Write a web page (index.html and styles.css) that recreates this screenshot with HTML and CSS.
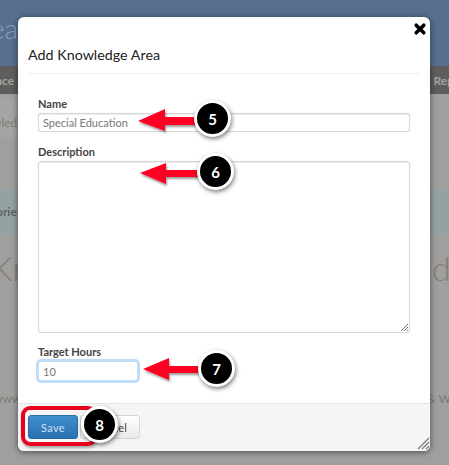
FILE: index.html
```html
<!DOCTYPE html>
<html lang="en">
<head>
    <meta charset="UTF-8">
    <meta name="viewport" content="width=device-width, initial-scale=1.0">
    <title>Add Knowledge Area</title>
    <link rel="stylesheet" href="styles.css">
</head>
<body>
<div class="page">
    <div class="page-banner"><span>ea</span></div>
    <div class="page-nav"><span>ace</span><span>Rep</span></div>
    <div class="page-crumbs"><span>wled</span></div>
    <div class="page-alert"><span>orie</span></div>
    <div class="page-heading"><span>Kn</span><span>dg</span></div>
    <div class="page-footer"><span>www</span><span>&amp; W</span></div>
</div>

<div class="modal">
    <div class="modal-header">
        <button class="modal-close" title="Close">
            <svg width="14" height="14" viewBox="0 0 14 14">
                <path d="M3.2 3.2 L10.8 10.8 M10.8 3.2 L3.2 10.8" stroke="#000" stroke-width="3.6" stroke-linecap="round"/>
            </svg>
        </button>
        <h3>Add Knowledge Area</h3>
    </div>
    <div class="modal-body">
        <label class="field-label">Name</label>
        <input class="field-input" type="text" value="Special Education">
        <label class="field-label">Description</label>
        <div class="field-textarea">
            <svg class="grip-small" width="9" height="9" viewBox="0 0 9 9">
                <path d="M1 8 L8 1 M4 8 L8 4 M7 8 L8 7" stroke="#777" stroke-width="1"/>
            </svg>
        </div>
        <label class="field-label">Target Hours</label>
        <input class="field-input field-hours" type="text" value="10">
    </div>
    <div class="modal-footer">
        <button class="btn btn-save">Save</button>
        <button class="btn btn-cancel">Cancel</button>
        <svg class="grip-large" width="13" height="13" viewBox="0 0 13 13">
            <path d="M1 12 L12 1 M5 12 L12 5 M9 12 L12 9" stroke="#777" stroke-width="1.2"/>
        </svg>
    </div>
</div>

<!-- callouts drawn on top of the screenshot -->
<svg class="callout-arrows" width="449" height="465" viewBox="0 0 449 465">
    <defs>
        <filter id="arrow-shadow" x="-20%" y="-30%" width="140%" height="170%">
            <feDropShadow dx="1" dy="2" stdDeviation="1.2" flood-color="#000" flood-opacity="0.4"/>
        </filter>
    </defs>
    <g fill="#ff0022" filter="url(#arrow-shadow)">
        <path d="M138 121 L165 109 L165 117 L198 117 L198 125 L165 125 L165 131 Z"/>
        <path d="M140 173 L166 163 L166 170 L200 170 L200 177 L166 177 L166 184 Z"/>
        <path d="M143 369 L169 358 L169 366 L202 366 L202 373 L169 373 L169 380 Z"/>
    </g>
</svg>
<div class="callout-box"></div>
<div class="callout-badge badge-five">5</div>
<div class="callout-badge badge-six">6</div>
<div class="callout-badge badge-seven">7</div>
<div class="callout-badge badge-eight">8</div>
</body>
</html>
```

FILE: styles.css
```css
* {
    margin: 0;
    padding: 0;
    box-sizing: border-box;
    font-family: 'Lato', 'Liberation Sans', sans-serif;
}

body {
    width: 449px;
    height: 465px;
    overflow: hidden;
    position: relative;
    background-color: #a09f9d;
}

.page {
    display: flex;
    flex-direction: column;
    height: 100%;
    color: #7a7977;
}

.page > div {
    display: flex;
    justify-content: space-between;
    align-items: center;
    overflow: hidden;
    white-space: nowrap;
}

.page-banner {
    height: 66px;
    background-color: #57708f;
    color: #8fa1b6;
    font-size: 28px;
    font-weight: 300;
    padding-bottom: 10px;
}

.page-banner span {
    margin-left: -10px;
}

.page-nav {
    height: 28px;
    background-color: #5f5e5c;
    color: #a3a2a1;
    font-size: 12px;
    font-weight: 700;
    margin-bottom: 3px;
}

.page-nav span:first-child {
    margin-left: -4px;
}

.page-nav span:last-child {
    margin-right: -5px;
}

.page-crumbs {
    width: 50%;
    height: 40px;
    background-color: #a6a5a3;
    font-size: 12px;
    padding-top: 10px;
    margin-bottom: 51px;
}

.page-crumbs span {
    margin-left: -8px;
}

.page-alert {
    height: 47px;
    background-color: #95a1a3;
    color: #5d6466;
    font-size: 12px;
    font-weight: 700;
}

.page-alert span {
    margin-left: -4px;
}

.page-heading {
    height: 64px;
    color: #7f7e7c;
    font-size: 34px;
    font-weight: 300;
}

.page-heading span:first-child {
    margin-left: -9px;
}

.page-heading span:last-child {
    margin-right: -19px;
}

.page-footer {
    height: 20px;
    margin-top: 89px;
    font-size: 12px;
}

.page-footer span:first-child {
    margin-left: -7px;
}

.page-footer span:last-child {
    margin-right: -2px;
}

.modal {
    position: absolute;
    left: 18px;
    top: 17px;
    width: 412px;
    height: 434px;
    display: flex;
    flex-direction: column;
    background-color: #fff;
    border-radius: 6px;
    box-shadow: 0 1px 6px rgba(0, 0, 0, 0.55);
}

.modal-header {
    height: 57px;
    margin: 0 10px;
    border-bottom: 1px solid #eee;
    padding-top: 29px;
    position: relative;
}

.modal-header h3 {
    font-size: 14.3px;
    line-height: 18px;
    font-weight: 400;
    color: #222;
}

.modal-close {
    position: absolute;
    right: -7px;
    top: 5px;
    width: 14px;
    height: 14px;
    display: flex;
    background: none;
    border: none;
}

.modal-body {
    flex: 1;
    display: flex;
    flex-direction: column;
    align-items: flex-start;
    padding: 23px 20px 0;
}

.field-label {
    font-size: 11px;
    line-height: 14px;
    font-weight: 700;
    color: #444;
    margin-bottom: 2px;
}

.field-input {
    width: 372px;
    height: 19px;
    border: 1px solid #d8d8d8;
    border-radius: 3px;
    padding: 0 4px;
    font-size: 11px;
    color: #777;
    outline: none;
    margin-bottom: 13px;
    box-shadow: inset 0 1px 1px rgba(0, 0, 0, 0.08), 0 0 1px rgba(0, 0, 0, 0.15);
}

.field-textarea {
    width: 372px;
    height: 172px;
    border: 1px solid #d8d8d8;
    border-radius: 3px;
    position: relative;
    margin-bottom: 12px;
    box-shadow: inset 0 1px 1px rgba(0, 0, 0, 0.08), 0 0 1px rgba(0, 0, 0, 0.15);
}

.grip-small {
    position: absolute;
    right: 0;
    bottom: 0;
}

.field-hours {
    width: 100px;
    height: 20px;
    margin-bottom: 0;
    border-color: #c4ddf3;
    box-shadow: 0 0 0 2px rgba(170, 210, 245, 0.75);
}

.modal-footer {
    height: 48px;
    display: flex;
    align-items: flex-start;
    gap: 2px;
    padding: 11px 10px 0;
    background-color: #f5f5f5;
    border-top: 1px solid #e5e5e5;
    border-radius: 0 0 6px 6px;
    position: relative;
}

.btn {
    height: 24px;
    border-radius: 3px;
    font-size: 11px;
    letter-spacing: 0.3px;
}

.btn-save {
    width: 50px;
    color: #cfe1f2;
    background: linear-gradient(#3f8fcf, #2a70b3);
    border: 1px solid #2a6aa6;
}

.btn-cancel {
    width: 60px;
    color: #444;
    background: linear-gradient(#fff, #e9e9e9);
    border: 1px solid #d5d5d5;
}

.grip-large {
    position: absolute;
    right: 0;
    bottom: 1px;
}

.callout-arrows {
    position: absolute;
    left: 0;
    top: 0;
}

.callout-box {
    position: absolute;
    left: 21px;
    top: 406px;
    width: 76px;
    height: 40px;
    border: 4px solid #e8001c;
    border-radius: 9px;
    box-shadow: 1px 2px 3px rgba(0, 0, 0, 0.35);
}

.callout-badge {
    position: absolute;
    width: 37px;
    height: 37px;
    display: flex;
    align-items: center;
    justify-content: center;
    background-color: #000;
    border: 3px solid #fff;
    border-radius: 50%;
    color: #fff;
    font-size: 15px;
    font-weight: 700;
    box-shadow: 1px 2px 4px rgba(0, 0, 0, 0.5);
}

.badge-five {
    left: 194px;
    top: 100px;
}

.badge-six {
    left: 197px;
    top: 153px;
}

.badge-seven {
    left: 198px;
    top: 350px;
}

.badge-eight {
    left: 81px;
    top: 406px;
}
```
